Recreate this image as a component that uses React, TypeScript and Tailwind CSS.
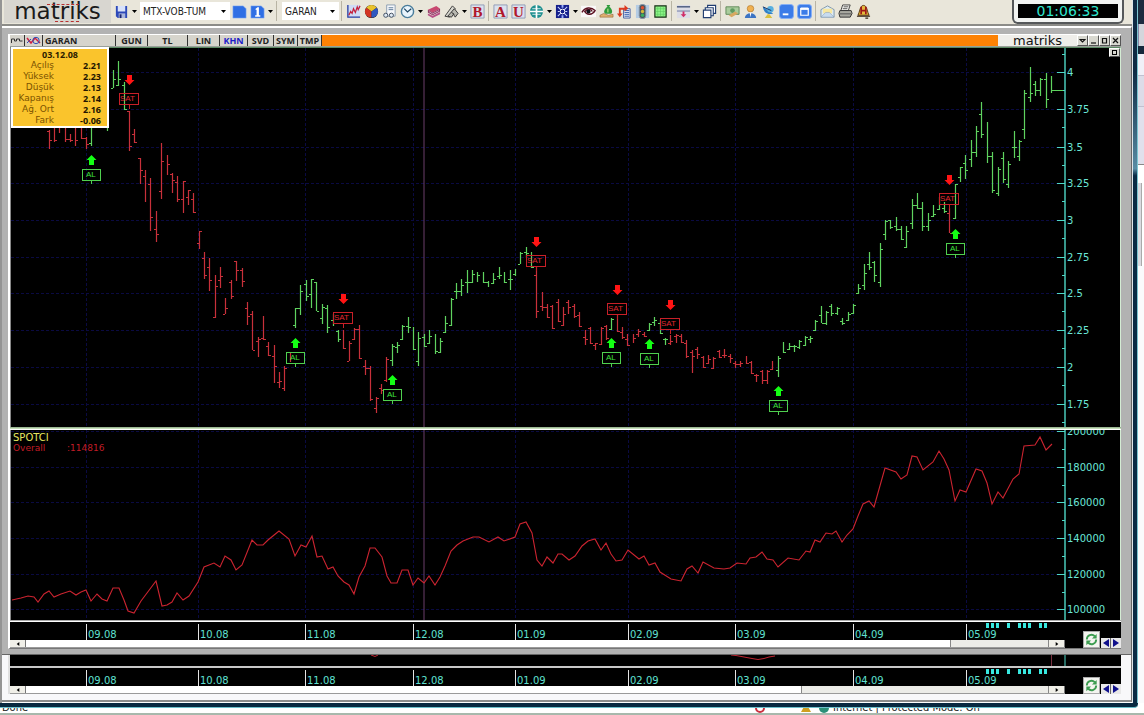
import React from "react";

type Bar = [number, number, number, number, number];

// Each bar: x, high, low, open, close (0 = no tick), in chart units.
const FALL_1: Bar[] = [
  [49, 130, 149, 131, 140], [54, 126, 142, 0, 140], [59, 124, 133, 0, 0], [65, 124, 142, 0, 139],
  [70, 134, 142, 139, 140], [75, 126, 146, 0, 140], [81, 126, 139, 0, 138], [86, 137, 149, 138, 144],
];
const RISE_0: Bar[] = [
  [91, 126, 146, 143, 0], [107, 113, 131, 0, 0], [113, 70, 88, 88, 79], [118, 61, 86, 85, 79], [124, 82, 110, 85, 109],
];
const FALL_2: Bar[] = [
  [129, 111, 151, 111, 146], [134, 129, 143, 134, 142], [140, 158, 184, 158, 170], [145, 170, 202, 176, 0],
  [150, 178, 231, 184, 217], [156, 211, 242, 229, 234], [161, 143, 199, 191, 161], [167, 155, 175, 0, 164],
  [172, 173, 193, 174, 180], [177, 176, 202, 182, 199], [183, 181, 213, 199, 181], [188, 190, 205, 197, 190],
  [193, 193, 213, 199, 212], [199, 231, 249, 243, 231], [204, 252, 279, 258, 275], [209, 258, 291, 267, 280],
  [215, 275, 318, 317, 286], [220, 267, 288, 280, 276], [225, 298, 314, 314, 308], [231, 280, 299, 282, 296],
  [236, 261, 281, 261, 270], [242, 268, 287, 270, 281], [247, 302, 325, 308, 316], [252, 311, 350, 314, 350],
  [258, 337, 357, 341, 339], [263, 316, 340, 338, 339], [268, 342, 356, 346, 355], [274, 345, 383, 356, 366],
  [279, 372, 388, 382, 381], [284, 366, 391, 388, 368], [290, 352, 362, 0, 0],
];
const RISE_1: Bar[] = [
  [295, 308, 328, 325, 308], [300, 285, 315, 308, 291], [306, 280, 301, 284, 296], [311, 279, 308, 294, 279],
  [316, 282, 311, 282, 311], [322, 304, 324, 318, 307], [327, 305, 333, 308, 327], [333, 314, 326, 320, 0],
  [338, 330, 342, 331, 339],
];
const FALL_3: Bar[] = [
  [343, 330, 349, 0, 348], [349, 341, 361, 361, 343], [354, 328, 340, 339, 329], [359, 325, 359, 329, 358],
  [365, 360, 375, 366, 368], [370, 366, 401, 368, 399], [376, 397, 413, 408, 398], [381, 384, 394, 388, 390],
  [386, 357, 382, 380, 359],
];
const RISE_2: Bar[] = [
  [392, 344, 366, 360, 346], [397, 342, 353, 347, 345], [402, 325, 340, 339, 326], [408, 317, 333, 326, 327],
  [413, 327, 350, 0, 349], [418, 332, 366, 361, 338], [424, 334, 347, 337, 346], [429, 330, 344, 343, 336],
  [435, 334, 354, 0, 351], [440, 338, 353, 352, 341], [445, 316, 333, 332, 323], [451, 298, 326, 325, 299],
  [456, 283, 299, 291, 291], [461, 279, 296, 291, 285], [467, 270, 293, 282, 282], [472, 270, 283, 282, 274],
  [477, 272, 282, 0, 275], [483, 272, 283, 0, 282], [488, 281, 287, 282, 0], [493, 273, 284, 283, 279],
  [499, 267, 279, 276, 275], [504, 272, 283, 0, 282], [510, 270, 290, 279, 279], [515, 269, 276, 274, 0],
  [520, 252, 264, 264, 253], [526, 247, 258, 252, 253], [531, 252, 268, 0, 267],
];
const FALL_4: Bar[] = [
  [536, 266, 318, 275, 311], [542, 292, 311, 306, 307], [547, 304, 318, 307, 317], [552, 305, 329, 306, 328],
  [558, 299, 322, 302, 321], [563, 307, 326, 325, 314], [568, 300, 314, 302, 307], [574, 304, 318, 306, 316],
  [579, 312, 327, 315, 326], [585, 330, 345, 337, 339], [590, 327, 344, 328, 343], [595, 343, 350, 345, 343],
  [601, 327, 345, 344, 328], [606, 325, 340, 326, 338], [617, 314, 332, 0, 331], [622, 327, 339, 332, 337],
  [627, 334, 346, 339, 345], [633, 334, 343, 0, 338], [638, 329, 337, 334, 331], [644, 332, 337, 334, 336],
  [670, 335, 345, 343, 341], [676, 334, 343, 336, 335], [681, 334, 343, 336, 342], [686, 340, 358, 343, 356],
  [692, 350, 373, 352, 356], [697, 347, 359, 349, 354], [703, 356, 368, 357, 367], [708, 355, 364, 363, 359],
  [713, 357, 369, 368, 358], [719, 350, 358, 351, 357], [724, 349, 358, 355, 355], [730, 354, 363, 356, 358],
  [735, 361, 368, 363, 364], [740, 361, 367, 364, 363], [746, 356, 364, 0, 363], [751, 361, 374, 362, 373],
  [756, 374, 382, 375, 375], [762, 370, 384, 371, 380], [767, 370, 384, 380, 371], [772, 361, 370, 369, 0],
  [949, 208, 233, 213, 233],
];
const RISE_3: Bar[] = [
  [611, 318, 330, 329, 319], [649, 323, 331, 330, 324], [654, 317, 326, 322, 320], [660, 320, 334, 323, 333],
  [665, 338, 345, 339, 339], [778, 356, 377, 370, 358], [783, 342, 353, 0, 352], [789, 343, 350, 349, 346],
  [794, 345, 352, 346, 346], [799, 340, 349, 347, 341], [805, 336, 346, 345, 337], [810, 336, 343, 339, 338],
  [815, 320, 331, 330, 321], [821, 306, 323, 315, 323], [826, 311, 325, 323, 312], [831, 304, 316, 306, 313],
  [837, 307, 315, 313, 308], [842, 318, 325, 321, 323], [848, 312, 321, 320, 314], [853, 304, 314, 313, 305],
  [858, 284, 294, 293, 288], [864, 264, 290, 285, 273], [869, 252, 270, 264, 267], [874, 261, 282, 262, 275],
  [880, 243, 287, 282, 249], [885, 220, 240, 234, 221], [890, 220, 229, 220, 227], [896, 217, 231, 226, 229],
  [901, 226, 240, 229, 239], [906, 226, 248, 247, 231], [912, 199, 229, 223, 205], [917, 193, 209, 205, 208],
  [922, 202, 231, 208, 226], [928, 213, 231, 226, 220], [933, 205, 217, 216, 214], [939, 197, 210, 209, 0],
  [944, 202, 213, 208, 211], [955, 184, 219, 218, 184], [960, 167, 182, 177, 167], [965, 155, 179, 163, 170],
  [971, 140, 167, 159, 152], [976, 126, 157, 152, 131], [981, 102, 138, 114, 134], [987, 122, 163, 0, 156],
  [992, 152, 193, 156, 190], [998, 167, 196, 193, 169], [1003, 152, 183, 158, 179], [1008, 161, 188, 184, 164],
  [1014, 131, 158, 147, 147], [1019, 140, 161, 156, 141], [1024, 90, 139, 129, 93], [1030, 67, 102, 97, 93],
  [1035, 81, 96, 84, 90], [1040, 78, 96, 90, 79], [1046, 73, 108, 79, 99], [1051, 76, 93, 0, 90],
];

const SPOT_LINE =
  "12,600 21,598 28,596 34,597 38,602 44,594 49,591 54,597 61,594 70,591 76,595 81,592 86,590 91,601 97,594 102,599 107,601 113,588 119,588 124,600 128,611 134,613 141,601 147,593 156,581 162,606 167,605 172,602 177,593 183,600 189,596 198,582 204,567 214,563 220,567 225,556 231,560 236,570 242,565 252,540 257,545 263,545 268,540 279,531 289,539 295,556 301,545 306,547 312,536 317,557 322,556 328,569 333,567 338,576 344,582 349,585 354,594 359,577 365,566 370,548 375,548 382,557 387,576 391,583 397,583 402,570 408,570 413,585 418,578 424,583 429,576 435,585 440,577 445,566 451,551 457,545 463,541 473,537 479,537 489,542 498,537 504,541 515,537 520,524 526,522 532,533 537,560 542,566 547,557 553,563 558,554 562,554 569,560 575,556 582,546 588,541 595,539 601,550 606,543 611,554 616,561 622,560 628,550 639,559 644,556 649,565 655,563 660,572 671,579 681,581 687,569 692,566 698,573 703,562 714,568 724,569 730,568 737,563 746,564 750,558 756,557 762,552 767,559 773,560 778,567 788,558 799,560 806,551 810,552 815,540 820,542 826,533 832,534 836,531 842,542 847,535 853,529 858,516 863,504 869,501 874,507 885,468 896,472 901,479 907,475 912,456 917,457 923,470 933,462 939,451 944,459 949,470 955,501 960,490 966,492 976,469 982,471 987,483 992,504 998,492 1003,498 1013,479 1019,474 1024,446 1035,445 1040,437 1046,450 1052,444";

const MONTHS: [number, string][] = [
  [86, "09.08"], [198, "10.08"], [305, "11.08"], [413, "12.08"], [515, "01.09"],
  [628, "02.09"], [735, "03.09"], [853, "04.09"], [966, "05.09"],
];
const PRICES: [number, string][] = [
  [72, "4"], [109, "3.75"], [147, "3.5"], [183, "3.25"], [220, "3"],
  [257, "2.75"], [293, "2.5"], [330, "2.25"], [367, "2"], [404, "1.75"],
];
const VOLUMES: [number, string][] = [
  [431, "200000"], [467, "180000"], [502, "160000"], [538, "140000"], [574, "120000"], [609, "100000"],
];
const SELLS: [number, number][] = [[129, 80], [343, 299], [536, 242], [617, 290], [670, 305], [949, 180]];
const BUYS: [number, number][] = [[91, 160], [295, 343], [392, 380], [611, 343], [649, 344], [778, 391], [955, 234]];
const SESSION_MARKS = [986, 991, 996, 1007, 1018, 1023, 1028, 1039, 1044];

const GREEN = "#5fd35f";
const RED = "#c8303a";
const CYAN = "#4fd8c8";

function barPath(bars: Bar[]) {
  return bars
    .map(
      ([x, hi, lo, o, c]) =>
        `M${x + 0.5} ${hi}V${lo}` + (o ? `M${x - 2} ${o + 0.5}H${x}` : "") + (c ? `M${x + 1} ${c + 0.5}H${x + 3}` : "")
    )
    .join("");
}

function Grid({ top, bottom, rows }: { top: number; bottom: number; rows: [number, string][] }) {
  return (
    <g>
      <g stroke="#0a0a42" strokeDasharray="3 2">
        {MONTHS.map(([x]) => (
          <line key={x} x1={x + 0.5} x2={x + 0.5} y1={top} y2={bottom} />
        ))}
        {rows.map(([y]) => (
          <line key={y} x1={11} x2={1057} y1={y + 0.5} y2={y + 0.5} />
        ))}
      </g>
      <line x1={424} x2={424} y1={top} y2={bottom} stroke="#6b3f6b" />
      <g stroke={CYAN}>
        <line x1={1065} x2={1065} y1={top} y2={bottom} strokeWidth={1.4} />
        {rows.map(([y]) => (
          <line key={y} x1={1057} x2={1065} y1={y + 0.5} y2={y + 0.5} />
        ))}
        {rows.map(([y]) => (
          <line key={y} x1={1062} x2={1065} y1={y + 18.5} y2={y + 18.5} />
        ))}
      </g>
      <g fill="#6ae6d8" fontSize={10} fontFamily="'DejaVu Sans', sans-serif">
        {rows.map(([y, t]) => (
          <text key={y} x={1067} y={y + 4}>
            {t}
          </text>
        ))}
      </g>
    </g>
  );
}

function PriceChart() {
  return (
    <svg viewBox="11 48 1109 379" className="block h-auto w-full bg-black" role="img" aria-label="GARAN">
      <Grid top={48} bottom={427} rows={PRICES} />
      <line x1={1062} x2={1065} y1={54.5} y2={54.5} stroke={CYAN} />
      <path d={barPath([...FALL_1, ...FALL_2, ...FALL_3, ...FALL_4])} stroke={RED} strokeWidth={1.2} fill="none" />
      <path d={barPath([...RISE_0, ...RISE_1, ...RISE_2, ...RISE_3])} stroke={GREEN} strokeWidth={1.2} fill="none" />
      <line x1={1052} x2={1063} y1={90.5} y2={90.5} stroke={GREEN} />
      <g fontFamily="'Liberation Sans', Arial, sans-serif" fontSize={8}>
        {SELLS.map(([x, y]) => (
          <g key={x}>
            <path d={`M${x - 2} ${y - 5}h5v5h2.500l-5 5l-5-5h2.500z`} fill="#ff1414" />
            <rect x={x - 9.5} y={y + 13.5} width={19} height={11} fill="none" stroke="#c82028" />
            <line x1={x + 0.5} x2={x + 0.5} y1={y + 25} y2={y + 29} stroke="#c82028" />
            <text x={x - 9} y={y + 21} fill="#e02830">
              SAT
            </text>
          </g>
        ))}
        {BUYS.map(([x, y]) => (
          <g key={x}>
            <path d={`M${x - 2} ${y + 5}h5v-5h2.500l-5-5l-5 5h2.500z`} fill="#14ff14" />
            <rect x={x - 8.5} y={y + 9.5} width={18} height={11} fill="none" stroke="#4fd04f" />
            <line x1={x + 0.5} x2={x + 0.5} y1={y + 21} y2={y + 24} stroke="#4fd04f" />
            <text x={x - 5} y={y + 17} fill="#3fe03f">
              AL
            </text>
          </g>
        ))}
      </g>
    </svg>
  );
}

function SpotChart() {
  return (
    <svg viewBox="11 430 1109 190" className="block h-auto w-full bg-black" role="img" aria-label="SPOTCI">
      <Grid top={430} bottom={620} rows={VOLUMES} />
      <polyline points={SPOT_LINE} fill="none" stroke="#cc2430" strokeWidth={1.1} />
      <g fontFamily="'DejaVu Sans', sans-serif">
        <text x={13} y={441} fill="#e8e860" fontSize={10}>SPOTCI</text>
        <text x={13} y={451} fill="#c01c26" fontSize={9}>Overall</text>
        <text x={67} y={451} fill="#c01c26" fontSize={9}>:114816</text>
      </g>
    </svg>
  );
}

function RefreshIcon() {
  return (
    <svg viewBox="0 0 16 16" className="block size-full" fill="none" stroke="#3c9c50" strokeWidth={2}>
      <path d="M3 8a5 5 0 0 1 8.500-3.500M13 8a5 5 0 0 1-8.500 3.500" />
      <path d="M13.500 2v5h-5zM2.500 14V9h5z" fill="#3c9c50" stroke="none" />
    </svg>
  );
}

function TimeAxis({ wideThumb = false }: { wideThumb?: boolean }) {
  return (
    <div className="flex bg-black">
      <div className="min-w-0 flex-1">
        <svg viewBox="10 622 1055 18" className="block h-auto w-full" role="img" aria-label="Tarih">
          {MONTHS.map(([x, label]) => (
            <g key={x}>
              <line x1={x + 0.5} x2={x + 0.5} y1={624} y2={640} stroke="#e4e4e4" />
              <text x={x + 2} y={638} fill="#5fe0d2" fontSize={10} fontFamily="'DejaVu Sans', sans-serif">
                {label}
              </text>
            </g>
          ))}
          {SESSION_MARKS.map((x) => (
            <rect key={x} x={x} y={623} width={3} height={5} fill="#38e8e0" />
          ))}
        </svg>
        <div className="flex h-2 border-b border-[#9a9a9a] bg-white">
          <button aria-label="Sola kaydır" className="flex w-4 items-center justify-center border-r border-[#777] bg-[#f0efe8]">
            <svg viewBox="0 0 4 6" className="h-1 w-1"><path d="M4 0v6L0 3z" /></svg>
          </button>
          <div className="flex-1" />
          <div className={wideThumb ? "w-[23.5%] border-x border-[#888] bg-[#ecece8]" : "w-[9.4%] border-x border-[#888] bg-[#ecece8]"} />
          <button aria-label="Sağa kaydır" className="flex w-4 items-center justify-center border-r border-[#777] bg-[#f0efe8]">
            <svg viewBox="0 0 4 6" className="h-1 w-1"><path d="M0 0v6l4-3z" /></svg>
          </button>
        </div>
      </div>
      <div className="flex w-14 items-end justify-end">
        <button aria-label="Yenile" className="mr-px size-[17px] border border-[#aaa] bg-[#f4f4f0]">
          <RefreshIcon />
        </button>
        <button aria-label="Geri" className="flex h-[10px] w-[10px] items-center justify-center border-r border-[#666] bg-[#e8e8e8]">
          <svg viewBox="0 0 6 8" className="h-2 w-[6px]" fill="#10108c"><path d="M6 0v8L0 4z" /></svg>
        </button>
        <button aria-label="İleri" className="flex h-[10px] w-[10px] items-center justify-center bg-[#e8e8e8]">
          <svg viewBox="0 0 6 8" className="h-2 w-[6px]" fill="#10108c"><path d="M0 0v8l6-4z" /></svg>
        </button>
      </div>
    </div>
  );
}

/* ---------- toolbar ---------- */

const ICONS: Record<string, React.ReactNode> = {
  Kaydet: (
    <>
      <path d="M2 2h12v13H4l-2-2z" fill="#2d49b8" />
      <path d="M4 2h8v6H4z" fill="#d8e2fa" />
      <path d="M5 10h7v5H5z" fill="#a9b6dc" />
      <path d="M6 11h2v4H6z" fill="#18246e" />
    </>
  ),
  Sayfa: <path d="M1 2h11l3 3v10H1z" fill="#2f6fe4" stroke="#7eaaf4" strokeWidth={0.6} />,
  "Sayfa 1": (
    <>
      <path d="M1 2h11l3 3v10H1z" fill="#2f6fe4" stroke="#7eaaf4" strokeWidth={0.6} />
      <path d="M6 5l2-1.500h1.500V12H11v1.500H5.500V12H7V6L6 6.500z" fill="#fff" />
    </>
  ),
  Grafik: (
    <>
      <path d="M1 1h14v14H1z" fill="#cfdcf6" />
      <path d="M2 1v13h13" stroke="#2b3fa0" fill="none" strokeWidth={1.400} />
      <path d="M3 12l2-4 1.500 2L8 5l2 4 2-6 1 3 2-4" stroke="#c41f3c" fill="none" strokeWidth={1.300} />
    </>
  ),
  Pasta: (
    <>
      <circle cx="8" cy="8" r="7" fill="#222" />
      <path d="M8 8L2.500 4A6.500 6.500 0 0 1 13.500 4z" fill="#e9c22c" />
      <path d="M8 8L2.500 4A6.500 6.500 0 0 0 8 14.500z" fill="#d33423" />
      <path d="M8 8v6.500A6.500 6.500 0 0 0 13.500 4z" fill="#3058c0" />
    </>
  ),
  Haber: (
    <>
      <path d="M5 1h9v12H5z" fill="#f6f8fb" stroke="#8a9cb0" />
      <path d="M7 4h5M7 6h5" stroke="#5b7a98" />
      <circle cx="4" cy="12" r="2.200" fill="#dfe9f4" stroke="#3c4a5c" />
      <circle cx="10" cy="12" r="2.200" fill="#dfe9f4" stroke="#3c4a5c" />
    </>
  ),
  Saat: (
    <>
      <circle cx="8" cy="8" r="6.500" fill="#e8f4fc" stroke="#4a7d9c" strokeWidth={1.500} />
      <path d="M4.500 5L8 8.500 12 5" stroke="#1f4560" fill="none" strokeWidth={1.300} />
    </>
  ),
  Kitaplar: (
    <>
      <path d="M2 6l9-4 4 3-8 4z" fill="#c84870" />
      <path d="M2 6v3l5 3 8-4V5L7 9z" fill="#8b2c5c" />
      <path d="M2 10v2l5 3 8-4V8.500L7 12.500z" fill="#b85088" />
      <path d="M3 8l4 2.500 7-3.500" stroke="#fff" strokeWidth={0.600} fill="none" />
    </>
  ),
  Araçlar: (
    <>
      <path d="M1 13L9 2l3 3-6 9z" fill="#d8d8d0" stroke="#3a3a3a" />
      <path d="M4 13L11 5l4 5-3 4-2-3-2 3z" fill="#b8b8b0" stroke="#333" />
      <path d="M8 9l3 2" stroke="#222" />
    </>
  ),
  B: <LetterTile letter="B" />,
  A: <LetterTile letter="A" />,
  U: <LetterTile letter="U" />,
  Dünya: (
    <>
      <circle cx="8" cy="8" r="7" fill="#1f9090" />
      <path d="M1 8h14M8 1v14" stroke="#fff" strokeWidth={1.800} />
      <path d="M3.500 5h9M3.500 11h9" stroke="#fff" strokeWidth={0.800} />
    </>
  ),
  Ağ: (
    <>
      <path d="M1 1h14v14H1z" fill="#15208c" />
      <path d="M3 3l10 10M13 3L3 13M3 8h2M11 8h2" stroke="#c8d4ff" strokeWidth={1.100} />
      <circle cx="8" cy="8" r="2.500" fill="#15208c" stroke="#fff" />
      <path d="M7 1h2v3H7zM7 12h2v3H7z" fill="#9cb0ff" />
    </>
  ),
  İzle: (
    <>
      <path d="M0 2h16v12H0z" fill="#faf8f8" />
      <path d="M1 9c3-6 10-6 14-2-3 5-9 5-11 1 3-3 7-3 8 0" stroke="#5a1020" strokeWidth={1.500} fill="none" />
      <circle cx="8" cy="8" r="2.200" fill="#101018" />
    </>
  ),
  Para: (
    <>
      <path d="M8 1h4l-1 2c3 2 4 6 2 7.500H7C4 9 6 5 9 3z" fill="#2f9c3c" />
      <path d="M1 12l4-2 5 2 5-1v3H1z" fill="#e0b070" stroke="#7a4a20" strokeWidth={0.500} />
      <path d="M9.500 5v4" stroke="#d8f0a0" />
    </>
  ),
  Aktar: (
    <>
      <path d="M7 5h7v10H7z" fill="#e8eef8" stroke="#4860a0" />
      <path d="M8 7h5M8 9h5M8 11h5M8 13h5" stroke="#3058a8" />
      <path d="M2 11V4h6V1l4 3.500L8 8V6H4v5z" fill="#dd3a20" />
      <path d="M0 10h6l-3 4z" fill="#dd3a20" />
    </>
  ),
  Işıklar: (
    <>
      <path d="M1 1h14v14H1z" fill="#b4cce4" />
      <rect x="4.500" y="0.500" width="7" height="15" rx="3" fill="#4a5560" stroke="#8898a8" />
      <circle cx="8" cy="4" r="1.800" fill="#e05030" />
      <circle cx="8" cy="8" r="1.800" fill="#d8b838" />
      <circle cx="8" cy="12" r="1.800" fill="#38b060" />
    </>
  ),
  Tablo: (
    <>
      <path d="M2 2h12v12H2z" fill="#8cf486" stroke="#142c14" strokeWidth={1.200} />
      <path d="M5 3v10M8 3v10M11 3v10M3 5h10M3 8h10M3 11h10" stroke="#5cc860" strokeWidth={0.600} />
    </>
  ),
  Böl: (
    <>
      <path d="M1 1h14v14H1z" fill="#dcdce6" />
      <path d="M1 3h14" stroke="#48587c" strokeWidth={1.500} />
      <path d="M1 7.500h14" stroke="#9098b8" strokeWidth={1.500} />
      <path d="M7 8h2v3h2l-3 3-3-3h2z" fill="#d02c68" />
    </>
  ),
  Pencereler: (
    <g fill="#fff" stroke="#1f3c70" strokeWidth={1.200}>
      <path d="M6 1.500h8.500V10H6z" />
      <path d="M3.500 4H12v8.500H3.500z" />
      <path d="M1.500 6.500H9.500v8H1.500z" />
    </g>
  ),
  Banknot: (
    <>
      <path d="M1 3h14v8H1z" fill="#a9cc9c" stroke="#608a58" />
      <circle cx="8" cy="7" r="2.500" fill="#5f9a60" />
      <path d="M4 12l7-4 3 2-7 4z" fill="#d8a860" />
    </>
  ),
  Kullanıcı: (
    <>
      <circle cx="8" cy="5" r="3.500" fill="#f0b050" stroke="#a86c20" strokeWidth={0.600} />
      <path d="M2 15c0-7 12-7 12 0z" fill="#3c74c4" />
      <path d="M7 9h2l-1 5z" fill="#fff" />
    </>
  ),
  Uydu: (
    <>
      <path d="M2 3c1 7 6 9 11 7z" fill="#2f80c8" />
      <circle cx="10" cy="5.500" r="3.500" fill="#58b0e0" />
      <path d="M7 11l-3 4h8l-3-4" fill="#d8c040" />
      <path d="M2 3l9 4" stroke="#183060" />
    </>
  ),
  Küçült: (
    <>
      <rect x="0.500" y="0.500" width="15" height="15" rx="3" fill="#3c7ce8" stroke="#88b0f4" />
      <path d="M4 11h6" stroke="#fff" strokeWidth={2} />
    </>
  ),
  Büyüt: (
    <>
      <rect x="0.500" y="0.500" width="15" height="15" rx="3" fill="#3c7ce8" stroke="#88b0f4" />
      <path d="M4 5h8v7H4z" fill="none" stroke="#fff" strokeWidth={1.300} />
      <path d="M4 5h8" stroke="#fff" strokeWidth={2.500} />
    </>
  ),
  Posta: (
    <>
      <path d="M1 6l7-4 7 4v8H1z" fill="#dcecf8" stroke="#7c94a8" />
      <path d="M3 5h10v5H3z" fill="#f8e8a0" />
      <path d="M1 14l5-5h4l5 5z" fill="#c8dcf0" stroke="#8ca0b4" strokeWidth={0.600} />
    </>
  ),
  Yazdır: (
    <>
      <path d="M5 1h8l-2 6H3z" fill="#f8f8f4" stroke="#404040" />
      <path d="M2 7h12l1 3-2 4H2L1 10z" fill="#a8a8a0" stroke="#303030" />
      <path d="M6 3h5M5 5h5M2 10.500h12" stroke="#505050" />
    </>
  ),
  Alarm: (
    <>
      <path d="M2 12C4 9 4 1.500 8 1.500s4 7.500 6 10.500z" fill="#e4b83c" stroke="#54300c" />
      <path d="M5.500 3v8M10.500 3v8M5.500 7h5" stroke="#a01818" strokeWidth={1.800} />
      <path d="M1 13h14M10 15h3" stroke="#302010" strokeWidth={1.200} />
    </>
  ),
};

function LetterTile({ letter }: { letter: string }) {
  return (
    <>
      <path d="M1 1h14v14H1z" fill="#dbe1ee" stroke="#8f9bb4" />
      <text x="8" y="13.500" textAnchor="middle" fontFamily="'Liberation Serif', serif" fontWeight="bold" fontSize="16" fill="#b0182c">
        {letter}
      </text>
    </>
  );
}

function Tool({ name }: { name: string }) {
  return (
    <button aria-label={name} className="flex h-5 w-[18px] shrink-0 items-center justify-center">
      <svg viewBox="0 0 16 16" className="size-[15px]">
        {ICONS[name]}
      </svg>
    </button>
  );
}

function More({ label }: { label: string }) {
  return (
    <button aria-label={label} className="flex h-5 w-2 shrink-0 items-center justify-center">
      <svg viewBox="0 0 5 3" className="h-[3px] w-[5px]"><path d="M0 0h5L2.500 3z" /></svg>
    </button>
  );
}

function Sep() {
  return <div className="mx-[2px] h-5 w-px shrink-0 bg-[#b8b4a4]" />;
}

function Picker({ label, value, width }: { label: string; value: string; width: string }) {
  return (
    <div className={`relative flex h-[18px] shrink-0 items-center bg-white ${width}`}>
      <select
        aria-label={label}
        defaultValue={value}
        className="h-[18px] w-full appearance-none bg-transparent pl-[3px] font-['DejaVu_Sans_Condensed','DejaVu_Sans',sans-serif] text-[10px] text-[#222] outline-none"
      >
        <option>{value}</option>
      </select>
      <svg viewBox="0 0 5 3" className="pointer-events-none absolute right-1 h-[3px] w-[5px]"><path d="M0 0h5L2.500 3z" /></svg>
    </div>
  );
}

function Toolbar() {
  return (
    <header className="flex h-[26px] items-start border-b-2 border-[#8c8c88] bg-[#e9e6da] pl-[2px]">
      <div className="relative mr-px flex h-[23px] w-[107px] shrink-0 items-center justify-center bg-[#d8d6d0]">
        <span className="font-['DejaVu_Sans',sans-serif] text-[23px] leading-[23px] text-[#1a1a1a]">matriks</span>
        <div className="absolute right-8 top-1 w-8 border-t border-dashed border-[#b83030]" />
        <div className="absolute bottom-px right-8 w-6 border-b border-dashed border-[#b83030]" />
      </div>
      <nav aria-label="Araç çubuğu" className="flex items-center pt-[1px]">
        <Tool name="Kaydet" />
        <More label="Kaydet seçenekleri" />
        <Picker label="Liste" value="MTX-VOB-TUM" width="ml-[2px] w-[90px]" />
        <Tool name="Sayfa" />
        <Tool name="Sayfa 1" />
        <More label="Sayfalar" />
        <Sep />
        <Picker label="Sembol" value="GARAN" width="ml-[3px] w-[57px]" />
        <Sep />
        <Tool name="Grafik" />
        <Tool name="Pasta" />
        <Tool name="Haber" />
        <Tool name="Saat" />
        <More label="Saat seçenekleri" />
        <Tool name="Kitaplar" />
        <Tool name="Araçlar" />
        <More label="Araç seçenekleri" />
        <Tool name="B" />
        <Sep />
        <Tool name="A" />
        <Tool name="U" />
        <Tool name="Dünya" />
        <More label="Dünya seçenekleri" />
        <Tool name="Ağ" />
        <More label="Ağ seçenekleri" />
        <Tool name="İzle" />
        <Tool name="Para" />
        <Tool name="Aktar" />
        <Tool name="Işıklar" />
        <Tool name="Tablo" />
        <Sep />
        <Tool name="Böl" />
        <More label="Bölme seçenekleri" />
        <Tool name="Pencereler" />
        <Sep />
        <Tool name="Banknot" />
        <Tool name="Kullanıcı" />
        <Tool name="Uydu" />
        <Tool name="Küçült" />
        <Tool name="Büyüt" />
        <Sep />
        <Tool name="Posta" />
        <Tool name="Yazdır" />
        <Tool name="Alarm" />
      </nav>
      <div className="ml-auto mr-2 h-6 w-28 shrink-0 rounded-b-md border-2 border-t-0 border-[#55585a] bg-[#f2f4f2] px-1 pt-1">
        <time className="block h-[14px] bg-black text-center font-['DejaVu_Sans',sans-serif] text-[14px] leading-[14px] text-[#30e8d0]">
          01:06:33
        </time>
      </div>
    </header>
  );
}

/* ---------- chart window ---------- */

const TABS: [string, string][] = [
  ["GUN", "w-8"], ["TL", "w-10"], ["LIN", "w-8"], ["KHN", "w-[28px]"], ["SVD", "w-[26px]"], ["SYM", "w-6"], ["TMP", "w-6"],
];

function WinButton({ label, d }: { label: string; d: string }) {
  return (
    <button aria-label={label} className="flex size-[11px] shrink-0 items-center justify-center border border-white border-b-[#555] border-r-[#555] bg-[#d8d8d0]">
      <svg viewBox="0 0 7 7" className="size-[7px]" fill="none" stroke="#111" strokeWidth={1.200}><path d={d} /></svg>
    </button>
  );
}

function TitleBar() {
  return (
    <div className="flex h-[12px] border-b border-[#9aa09a] bg-[#d6d4cc] font-['Open_Sans','Noto_Sans',sans-serif] text-[9px] font-bold leading-[11px] text-[#222]">
      <div className="flex w-[15px] items-center justify-center border-r border-[#333]">
        <svg viewBox="0 0 12 7" className="h-[7px] w-3" fill="none" stroke="#333"><path d="M.5 6V2h3v2h2V2h3v2h3" /></svg>
      </div>
      <div className="flex w-[18px] items-center justify-center border-r border-[#333]">
        <svg viewBox="0 0 16 9" className="h-[9px] w-4" fill="none">
          <path d="M1 2l4 5 4-5 5 5" stroke="#d02040" strokeWidth={1.500} />
          <circle cx="10" cy="4.500" r="3.200" stroke="#3050b8" />
          <path d="M1 7l4-4" stroke="#3050b8" />
        </svg>
      </div>
      <div className="w-[73px] border-r border-[#333] pl-[2px]">GARAN</div>
      {TABS.map(([t, w]) => (
        <button
          key={t}
          className={`${w} border-r border-[#333] text-center ${t === "KHN" ? "text-[#1c1cc8]" : "text-[#222]"}`}
        >
          {t}
        </button>
      ))}
      <div className="flex-1 bg-[#fd8204]" />
      <div className="w-[79px] bg-[#efeeea] text-center font-['DejaVu_Sans',sans-serif] text-[13px] font-normal leading-[11px] text-[#111]">
        matriks
      </div>
      <WinButton label="Menü" d="M1 2.500h5L3.500 5z" />
      <WinButton label="Simge durumuna küçült" d="M1 6h5" />
      <WinButton label="Ekranı kapla" d="M1.500 1.500h4v4.500h-4z" />
      <WinButton label="Kapat" d="M1 1l5 5M6 1L1 6" />
    </div>
  );
}

const QUOTE: [string, string][] = [
  ["Açılış", "2.21"], ["Yüksek", "2.23"], ["Düşük", "2.13"], ["Kapanış", "2.14"], ["Ağ. Ort", "2.16"], ["Fark", "-0.06"],
];

function QuoteTip() {
  return (
    <div className="absolute -top-px left-0 w-[98px] border-2 border-white bg-[#fac42c] text-[9px] leading-[11px]">
      <table className="w-full border-collapse">
        <caption className="font-['Open_Sans','Noto_Sans',sans-serif] font-bold text-[#2c1c00]">03.12.08</caption>
        <tbody>
          {QUOTE.map(([k, v]) => (
            <tr key={k}>
              <th scope="row" className="w-[41px] p-0 text-right align-middle font-['DejaVu_Sans',sans-serif] font-normal text-[#7a5200]">{k}</th>
              <td className="p-0 pr-[6px] text-right align-middle font-['Open_Sans','Noto_Sans',sans-serif] font-bold text-[#221400]">{v}</td>
            </tr>
          ))}
        </tbody>
      </table>
    </div>
  );
}

function ChartWindow() {
  return (
    <section className="border-b border-r border-t-2 border-b-[#666] border-r-[#666] border-t-white bg-[#b2b2b2] pb-[5px] pl-[6px] pr-[10px] pt-[6px]">
      <div className="border-b border-l-2 border-t border-b-[#777] border-l-white border-t-white">
        <TitleBar />
        <div className="relative border-l border-r border-t border-l-[#888] border-r-[#d4ecd4] border-t-[#5c8a64]">
          <PriceChart />
          <QuoteTip />
          <button aria-label="Grafiği büyüt" className="absolute right-0 top-0 flex h-[9px] w-[11px] items-center justify-center border border-white border-b-[#555] border-r-[#555] bg-[#d8d8d0]">
            <span className="size-[5px] border border-black" />
          </button>
        </div>
        <div className="h-[3px] border-y border-b-white border-t-[#9cb894] bg-[#c4dcb8]" />
        <div className="border-l border-r border-l-[#888] border-r-[#d4ecd4]">
          <SpotChart />
        </div>
        <div className="h-[2px] border-t border-[#aaa] bg-white" />
        <TimeAxis />
      </div>
    </section>
  );
}

function BackWindow() {
  return (
    <section className="border-b-2 border-r border-b-[#8c8c8c] border-r-[#777] bg-[#f8f8fa] pb-[6px] pl-[6px] pr-[10px]">
      <div className="border-l-2 border-[#e0e0e0]">
        <svg viewBox="10 655 1111 11" className="block h-auto w-full bg-black" aria-hidden="true">
          <path d="M371 655l4 1.500 3-1.500M731 655l5 .5 8 1.500 8 1.500 6 1 6-1 5-1.500 6-1" stroke="#c02430" fill="none" />
          <path d="M1051.500 655v11" stroke="#7a3040" />
          <path d="M1065 655v11" stroke={CYAN} />
        </svg>
        <div className="h-[2px] bg-[#c8c8c8]" />
        <TimeAxis wideThumb />
      </div>
    </section>
  );
}

function StatusBar() {
  return (
    <footer className="flex h-[7px] items-end overflow-hidden border-b-2 border-[#a8b8ac] bg-white font-['DejaVu_Sans_Condensed','DejaVu_Sans',sans-serif] text-[11px] leading-[10px] text-[#222]">
      <span className="w-[66%] pl-[2px]">Done</span>
      <svg viewBox="0 0 10 10" className="size-[10px] shrink-0"><circle cx="5" cy="5" r="4" fill="none" stroke="#cc3040" strokeWidth={2} /></svg>
      <svg viewBox="0 0 10 10" className="ml-9 size-[10px] shrink-0"><path d="M5 0l5 9H0z" fill="#d0a020" /></svg>
      <svg viewBox="0 0 10 10" className="ml-2 mr-1 size-[10px] shrink-0"><circle cx="5" cy="5" r="5" fill="#2c9078" /></svg>
      <span className="whitespace-nowrap">Internet | Protected Mode: On</span>
    </footer>
  );
}

function DesktopEdge() {
  return (
    <aside aria-hidden="true" className="flex w-[6px] shrink-0 flex-col">
      <div className="h-6 bg-[#1c2c40]" />
      <div className="h-[22px] border-l border-[#88a] bg-[#d4d6dc]" />
      <div className="h-2 bg-[#14283c]" />
      <div className="h-[22px] border-b border-[#c0c0d0] bg-[#f0f0f8]" />
      <div className="h-[31px] border-b border-[#c0c0d0] bg-[#dcdce8]" />
      <div className="h-[58px] border-b border-[#888] bg-[#e0e0ec]" />
      <div className="h-[18px] bg-white" />
      <div className="mr-[2px] h-[83px] border-r border-[#aaa] bg-[#dadae0]" />
      <div className="flex-1 bg-[#fafafc]" />
    </aside>
  );
}

export default function App() {
  return (
    <div className="bg-white">
      <div className="flex">
        <main className="min-w-0 flex-1 border-l-2 border-[#949494]">
          <Toolbar />
          <ChartWindow />
          <BackWindow />
          <div className="h-px bg-white" />
        </main>
        <div className="w-[6px] shrink-0 border-l border-r border-l-[#dfe6ea] border-r-[#7cc4d0] bg-linear-to-b from-[#0e2a44] from-10% via-[#5a8ca4] via-24% to-[#0a2a44] to-25%" />
        <DesktopEdge />
      </div>
      <div className="mr-[6px] h-[5px] rounded-br border-b border-[#6cc0cc] bg-[#082840]" />
      <StatusBar />
    </div>
  );
}
